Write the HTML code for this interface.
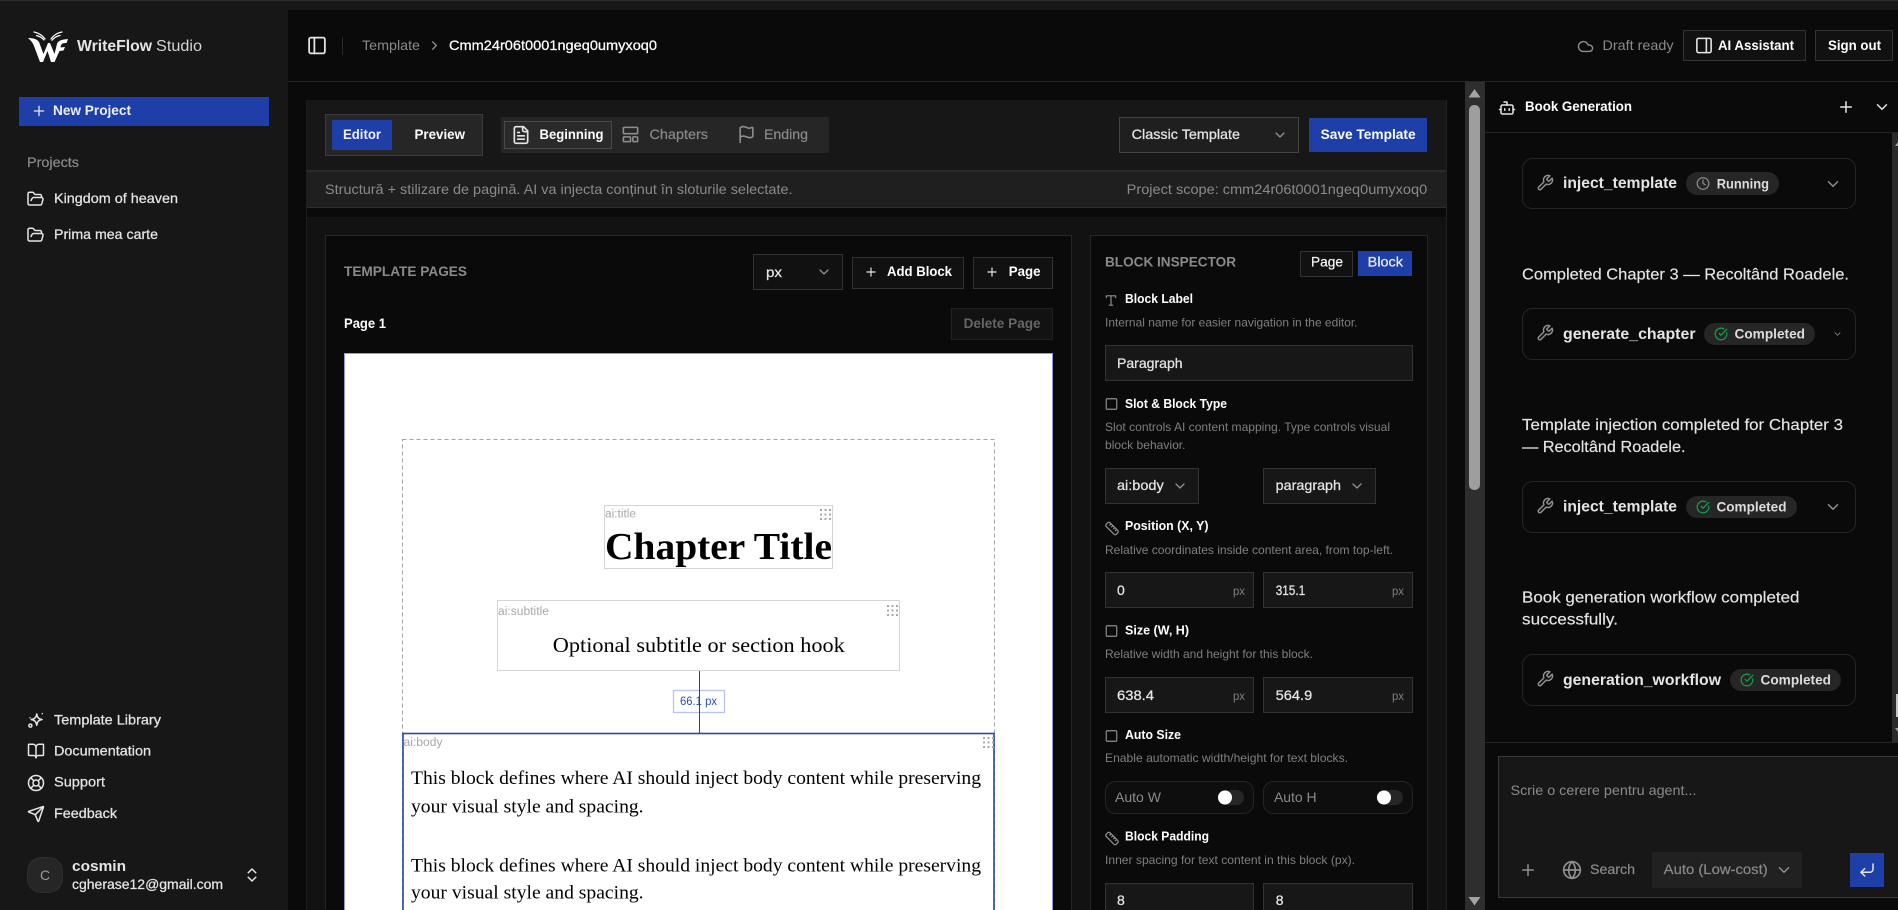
<!DOCTYPE html>
<html lang="ro">
<head>
<meta charset="utf-8">
<title>WriteFlow Studio</title>
<style>
html,body{margin:0;padding:0;background:#0a0a0a;width:1898px;height:910px;overflow:hidden}
svg{display:block}
text{font-family:"Liberation Sans","Noto Sans CJK SC",sans-serif;font-size:14px;fill:#e5e5e5;white-space:pre}
.m{stroke:#e5e5e5;stroke-width:.25}
.b{font-weight:700}
.w{fill:#fff}
.g{fill:#8a8a8a}
.gm{fill:#8a8a8a;stroke:#8a8a8a;stroke-width:.2}
.h{font-size:12px;fill:#7f7f7f}
.l{font-size:12.5px;fill:#fff;font-weight:700}
.t{font-size:16px;fill:#e5e5e5;stroke:#e5e5e5;stroke-width:.15}
.n{font-size:16px;fill:#e5e5e5;font-weight:700}
.bd{font-size:14px;fill:#dcdcdc;font-weight:700}
.s{font-family:"Liberation Serif","Noto Serif CJK SC",serif;fill:#000}
.lb{font-size:11.5px;fill:#a8a8a8}
.i{fill:none;stroke:#e5e5e5;stroke-width:2;stroke-linecap:round;stroke-linejoin:round}
.ig{fill:none;stroke:#8f8f8f;stroke-width:2;stroke-linecap:round;stroke-linejoin:round}
.ic{fill:none;stroke:#16a34a;stroke-width:2;stroke-linecap:round;stroke-linejoin:round}
.box{fill:#171717;stroke:#333}
.card{fill:#0a0a0a;stroke:#262626}
.pill{fill:#262626}
.grip{fill:#a8a8a8}
</style>
</head>
<body>
<svg xmlns="http://www.w3.org/2000/svg" width="1898" height="910" viewBox="0 0 1898 910">
<defs>
<symbol id="panel" viewBox="0 0 24 24"><rect x="3" y="3" width="18" height="18" rx="2"/><path d="M9 3v18"/></symbol>
<symbol id="panelr" viewBox="0 0 24 24"><rect x="3" y="3" width="18" height="18" rx="2"/><path d="M15 3v18"/></symbol>
<symbol id="folder" viewBox="0 0 24 24"><path d="m6 14 1.5-2.9A2 2 0 0 1 9.24 10H20a2 2 0 0 1 1.94 2.5l-1.54 6a2 2 0 0 1-1.95 1.5H4a2 2 0 0 1-2-2V5a2 2 0 0 1 2-2h3.9a2 2 0 0 1 1.69.9l.81 1.2a2 2 0 0 0 1.67.9H18a2 2 0 0 1 2 2v2"/></symbol>
<symbol id="spark" viewBox="0 0 24 24"><path d="M13 4c.6 4.6 2.4 6.6 7 7.400-4.600.8-6.400 2.800-7 7.600-.8-4.800-2.600-6.800-7.400-7.600 4.800-.8 6.600-2.800 7.400-7.400z"/><circle cx="4.500" cy="19.500" r="2"/><path d="M20.500 3.500v.01M4 9v.01"/></symbol>
<symbol id="book" viewBox="0 0 24 24"><path d="M12 7v14"/><path d="M3 18a1 1 0 0 1-1-1V4a1 1 0 0 1 1-1h5a4 4 0 0 1 4 4 4 4 0 0 1 4-4h5a1 1 0 0 1 1 1v13a1 1 0 0 1-1 1h-6a3 3 0 0 0-3 3 3 3 0 0 0-3-3z"/></symbol>
<symbol id="buoy" viewBox="0 0 24 24"><circle cx="12" cy="12" r="10"/><circle cx="12" cy="12" r="4"/><path d="m4.930 4.930 4.240 4.240M14.830 9.170l4.240-4.240M14.830 14.830l4.240 4.240M9.170 14.830l-4.240 4.240"/></symbol>
<symbol id="send" viewBox="0 0 24 24"><path d="M14.536 21.686a.5.5 0 0 0 .937-.024l6.500-19a.496.496 0 0 0-.635-.635l-19 6.500a.5.5 0 0 0-.024.937l7.930 3.180a2 2 0 0 1 1.112 1.110z"/><path d="m21.854 2.147-10.940 10.939"/></symbol>
<symbol id="updown" viewBox="0 0 24 24"><path d="m7 15 5 5 5-5M7 9l5-5 5 5"/></symbol>
<symbol id="file" viewBox="0 0 24 24"><path d="M15 2H6a2 2 0 0 0-2 2v16a2 2 0 0 0 2 2h12a2 2 0 0 0 2-2V7Z"/><path d="M14 2v4a2 2 0 0 0 2 2h4M10 9H8M16 13H8M16 17H8"/></symbol>
<symbol id="layout" viewBox="0 0 24 24"><rect x="3" y="3" width="18" height="8" rx="1"/><rect x="3" y="15" width="9" height="6" rx="1"/><rect x="15" y="15" width="6" height="6" rx="1"/></symbol>
<symbol id="flag" viewBox="0 0 24 24"><path d="M4 22V4a1 1 0 0 1 .4-.8A6 6 0 0 1 8 2c3 0 5 2 7.333 2q2 0 3.067-.8A1 1 0 0 1 20 4v10a1 1 0 0 1-.4.8A6 6 0 0 1 16 16c-3 0-5-2-8-2a6 6 0 0 0-4 1.528"/></symbol>
<symbol id="cloud" viewBox="0 0 24 24"><path d="M17.500 19H9a7 7 0 1 1 6.710-9h1.790a4.500 4.500 0 1 1 0 9Z"/></symbol>
<symbol id="bot" viewBox="0 0 24 24"><path d="M12 8V4H8"/><rect x="4" y="8" width="16" height="12" rx="2"/><path d="M2 14h2M20 14h2M15 13v2M9 13v2"/></symbol>
<symbol id="wrench" viewBox="0 0 24 24"><path d="M14.700 6.300a1 1 0 0 0 0 1.400l1.600 1.600a1 1 0 0 0 1.400 0l3.770-3.770a6 6 0 0 1-7.940 7.940l-6.910 6.910a2.120 2.120 0 0 1-3-3l6.910-6.910a6 6 0 0 1 7.940-7.940l-3.760 3.760z"/></symbol>
<symbol id="clock" viewBox="0 0 24 24"><circle cx="12" cy="12" r="10"/><path d="M12 6v6l4 2"/></symbol>
<symbol id="check" viewBox="0 0 24 24"><path d="M21.801 10A10 10 0 1 1 17 3.335"/><path d="m9 11 3 3L22 4"/></symbol>
<symbol id="globe" viewBox="0 0 24 24"><circle cx="12" cy="12" r="10"/><path d="M12 2a14.500 14.500 0 0 0 0 20 14.500 14.500 0 0 0 0-20M2 12h20"/></symbol>
<symbol id="enter" viewBox="0 0 24 24"><path d="M20 4v7a4 4 0 0 1-4 4H4"/><path d="m9 10-5 5 5 5"/></symbol>
<symbol id="ruler" viewBox="0 0 24 24"><path d="M21.300 15.300a2.400 2.400 0 0 1 0 3.400l-2.600 2.600a2.400 2.400 0 0 1-3.400 0L2.700 8.700a2.410 2.410 0 0 1 0-3.400l2.600-2.600a2.410 2.410 0 0 1 3.400 0Z"/><path d="m14.500 12.500 2-2M11.500 9.500l2-2M8.500 6.500l2-2M17.500 15.500l2-2"/></symbol>
<symbol id="type" viewBox="0 0 24 24"><path d="M12 4v16M4 7V4h16v3M9 20h6"/></symbol>
<symbol id="square" viewBox="0 0 24 24"><rect x="3" y="3" width="18" height="18" rx="2"/></symbol>
<symbol id="chev" viewBox="0 0 24 24"><path d="m6 9 6 6 6-6"/></symbol>
<symbol id="plus" viewBox="0 0 24 24"><path d="M5 12h14M12 5v14"/></symbol>
<symbol id="chevr" viewBox="0 0 24 24"><path d="m9 18 6-6-6-6"/></symbol>
<symbol id="gripd" viewBox="0 0 11 11"><g class="grip" style="stroke:none"><rect x="0" y="0" width="2" height="2"/><rect x="4.500" y="0" width="2" height="2"/><rect x="9" y="0" width="2" height="2"/><rect x="0" y="4.500" width="2" height="2"/><rect x="4.500" y="4.500" width="2" height="2"/><rect x="9" y="4.500" width="2" height="2"/><rect x="0" y="9" width="2" height="2"/><rect x="4.500" y="9" width="2" height="2"/><rect x="9" y="9" width="2" height="2"/></g></symbol>
</defs>

<!-- page base -->
<rect width="1898" height="910" fill="#0a0a0a"/>
<rect width="1898" height="10" fill="#171717"/>
<rect width="1898" height="1" fill="#2e2d28"/>

<!-- sidebar -->
<rect x="0" y="0" width="288" height="910" fill="#171717"/>
<rect width="288" height="1" fill="#2e2d28"/>
<path fill="#fff" d="M28 38C33 38 37 39 39 42L43.500 54L48 43L50 43L54.500 54L57 44C58 40.500 62 39.500 68 39L66.500 43C63 43 61.500 43.500 61 45.500L60.500 47.500L65 47L63.500 50.500L59.500 51L54.500 62L51 62L47.500 51L43 62L40 62L34 46C33 43 31 40.500 28 38Z"/>
<g fill="none" stroke="#fff" stroke-linecap="round" stroke-linejoin="round" stroke-width="1.200">
  <path d="M34 32c4 .8 8 3 11 7M36.500 35.500c3 .8 5.500 2.200 7.500 4.500"/>
  <path d="M62 32c-4 .6-8 2.800-11 7M60 35.500c-3 .5-6 2.300-8 4.800"/>
</g>
<text x="77" y="51" textLength="75" lengthAdjust="spacingAndGlyphs" class="b" style="font-size:16px;fill:#e5e5e5">WriteFlow</text>
<text x="156" y="51" textLength="46" lengthAdjust="spacingAndGlyphs" style="font-size:16px;fill:#d4d4d4">Studio</text>

<rect x="19" y="97" width="250" height="29" fill="#1e3ea8"/>
<use href="#plus" x="31" y="103" width="16" height="16" class="i"/>
<text x="53" y="115" textLength="78" lengthAdjust="spacingAndGlyphs" class="b" style="fill:#eef">New Project</text>
<text x="27" y="167" textLength="52" lengthAdjust="spacingAndGlyphs" class="gm">Projects</text>
<use href="#folder" x="26.500" y="190" width="18" height="18" class="i"/>
<text x="54" y="203" textLength="124" lengthAdjust="spacingAndGlyphs" class="m">Kingdom of heaven</text>
<use href="#folder" x="26.500" y="226" width="18" height="18" class="i"/>
<text x="54" y="239" textLength="104" lengthAdjust="spacingAndGlyphs" class="m">Prima mea carte</text>

<use href="#spark" x="27" y="711" width="18" height="18" class="i"/>
<text x="54" y="724.500" textLength="107" lengthAdjust="spacingAndGlyphs" class="m">Template Library</text>
<use href="#book" x="27" y="742" width="18" height="18" class="i"/>
<text x="54" y="755.500" textLength="97" lengthAdjust="spacingAndGlyphs" class="m">Documentation</text>
<use href="#buoy" x="27" y="774" width="18" height="18" class="i"/>
<text x="54" y="786.500" textLength="51" lengthAdjust="spacingAndGlyphs" class="m">Support</text>
<use href="#send" x="27" y="805" width="18" height="18" class="i"/>
<text x="54" y="818" textLength="63" lengthAdjust="spacingAndGlyphs" class="m">Feedback</text>

<rect x="27.500" y="857.500" width="35" height="35" rx="14" fill="#262626" stroke="#2f2f2f"/>
<text x="45" y="880" text-anchor="middle" style="font-size:14px;fill:#9a9a9a">C</text>
<text x="72" y="871" textLength="54" lengthAdjust="spacingAndGlyphs" class="b" style="font-size:15px">cosmin</text>
<text x="72" y="889" textLength="151" lengthAdjust="spacingAndGlyphs" class="m">cgherase12@gmail.com</text>
<use href="#updown" x="243" y="866" width="18" height="18" class="i"/>

<!-- header -->
<rect x="288" y="10" width="1610" height="71" fill="#0a0a0a"/>
<rect x="288" y="81" width="1610" height="1" fill="#262626"/>
<use href="#panel" x="306.500" y="35" width="21" height="21" class="i"/>
<rect x="342" y="37" width="1" height="18" fill="#2a2a2a"/>
<text x="362" y="50" textLength="58" lengthAdjust="spacingAndGlyphs" class="g">Template</text>
<use href="#chevr" x="427" y="38" width="15" height="15" class="ig"/>
<text x="449" y="50" textLength="208" lengthAdjust="spacingAndGlyphs" class="w" style="stroke:#fff;stroke-width:.25">Cmm24r06t0001ngeq0umyxoq0</text>
<use href="#cloud" x="1577" y="38" width="17" height="17" class="ig"/>
<text x="1602.500" y="50" textLength="71" lengthAdjust="spacingAndGlyphs" class="g">Draft ready</text>
<rect x="1683.500" y="30.500" width="122" height="30" fill="#111" stroke="#333"/>
<use href="#panelr" x="1694.500" y="36" width="19" height="19" class="i"/>
<text x="1718" y="50" textLength="76" lengthAdjust="spacingAndGlyphs" class="b w">AI Assistant</text>
<rect x="1815.500" y="30.500" width="77" height="30" fill="#111" stroke="#333"/>
<text x="1828" y="50" textLength="53" lengthAdjust="spacingAndGlyphs" class="b w">Sign out</text>

<!-- toolbar -->
<rect x="306" y="100" width="1141" height="71" fill="#171717"/>
<rect x="306" y="170" width="1141" height="2" fill="#2a2a2a"/>
<rect x="306" y="172" width="1141" height="35" fill="#1f1f1f"/>
<rect x="306" y="207" width="1141" height="1" fill="#2e2e2e"/>
<rect x="306" y="100" width="1" height="810" fill="#1c1c1c"/>
<rect x="1446" y="100" width="1" height="810" fill="#222"/>

<rect x="325.500" y="114.500" width="157" height="41" fill="#262626" stroke="#3c3c3c"/>
<rect x="332" y="120" width="60" height="30" fill="#1e3ea8"/>
<text x="343" y="139" textLength="38" lengthAdjust="spacingAndGlyphs" class="b" style="fill:#eef">Editor</text>
<text x="414.500" y="139" textLength="50.500" lengthAdjust="spacingAndGlyphs" class="b w">Preview</text>

<rect x="501" y="117" width="328" height="36" fill="#262626"/>
<rect x="504.500" y="121.500" width="107" height="27" fill="#2a2a2a" stroke="#4a4a4a"/>
<use href="#file" x="511" y="125" width="20" height="20" class="i"/>
<text x="539.500" y="139" textLength="64" lengthAdjust="spacingAndGlyphs" class="b w">Beginning</text>
<use href="#layout" x="621" y="125" width="19" height="19" class="ig"/>
<text x="649.500" y="139" textLength="58.500" lengthAdjust="spacingAndGlyphs" class="gm">Chapters</text>
<use href="#flag" x="737" y="125" width="19" height="19" class="ig"/>
<text x="764" y="139" textLength="44" lengthAdjust="spacingAndGlyphs" class="gm">Ending</text>

<rect x="1119.500" y="117.500" width="179" height="35" fill="#1f1f1f" stroke="#444"/>
<text x="1131.700" y="139" textLength="108.300" lengthAdjust="spacingAndGlyphs" class="m">Classic Template</text>
<use href="#chev" x="1272" y="127" width="16" height="16" class="ig"/>
<rect x="1309" y="118" width="118" height="34" fill="#1e3ea8"/>
<text x="1320.600" y="139" textLength="95" lengthAdjust="spacingAndGlyphs" class="b w">Save Template</text>

<text x="325" y="194" textLength="467.500" lengthAdjust="spacingAndGlyphs" class="g">Structură + stilizare de pagină. AI va injecta conținut în sloturile selectate.</text>
<text x="1126.700" y="194" textLength="300.500" lengthAdjust="spacingAndGlyphs" class="g">Project scope: cmm24r06t0001ngeq0umyxoq0</text>

<!-- workspace -->
<rect x="307" y="217" width="1139" height="693" fill="#121212"/>

<!-- template pages card -->
<rect x="325.500" y="235.500" width="746" height="690" class="card"/>
<text x="344" y="276" textLength="123" lengthAdjust="spacingAndGlyphs" class="b" style="font-size:13.500px;fill:#8a8a8a">TEMPLATE PAGES</text>
<rect x="753.500" y="254.500" width="89" height="35" fill="#111" stroke="#333"/>
<text x="766" y="277" textLength="16" lengthAdjust="spacingAndGlyphs" class="m">px</text>
<use href="#chev" x="816" y="264" width="16" height="16" class="ig"/>
<rect x="852.500" y="257.500" width="111" height="31" fill="#111" stroke="#333"/>
<use href="#plus" x="864" y="265" width="14" height="14" class="i"/>
<text x="887" y="276" textLength="65" lengthAdjust="spacingAndGlyphs" class="b w">Add Block</text>
<rect x="973.500" y="257.500" width="79" height="31" fill="#111" stroke="#333"/>
<use href="#plus" x="985" y="265" width="14" height="14" class="i"/>
<text x="1008.800" y="276" textLength="31.700" lengthAdjust="spacingAndGlyphs" class="b w">Page</text>
<text x="344" y="328" textLength="42" lengthAdjust="spacingAndGlyphs" class="b w">Page 1</text>
<rect x="951.500" y="308.500" width="101" height="31" fill="#121212" stroke="#222"/>
<text x="963.600" y="328" textLength="77" lengthAdjust="spacingAndGlyphs" class="b" style="fill:#666">Delete Page</text>

<!-- white page -->
<rect x="344.500" y="353.500" width="708" height="570" fill="#fff" stroke="#8f9cd6"/>
<rect x="402.500" y="439.500" width="592" height="480" fill="none" stroke="#a3a3ad" stroke-dasharray="4 3"/>

<rect x="604.500" y="505.500" width="228" height="63" fill="#fff" stroke="#d4d4d8"/>
<text x="605" y="517.500" textLength="31" lengthAdjust="spacingAndGlyphs" class="lb">ai:title</text>
<use href="#gripd" x="820" y="509" width="11" height="11"/>
<text x="605" y="559" textLength="227" lengthAdjust="spacingAndGlyphs" class="s b" style="font-size:38px">Chapter Title</text>

<rect x="497.500" y="600.500" width="402" height="70" fill="#fff" stroke="#d4d4d8"/>
<text x="498" y="615" textLength="51" lengthAdjust="spacingAndGlyphs" class="lb">ai:subtitle</text>
<use href="#gripd" x="887" y="605" width="11" height="11"/>
<text x="552.800" y="652" textLength="292" lengthAdjust="spacingAndGlyphs" class="s" style="font-size:21px">Optional subtitle or section hook</text>

<rect x="673.500" y="690.500" width="51" height="22" fill="#fff" stroke="#b9c4ec" stroke-width="1.300"/>
<text x="680" y="705" textLength="37" lengthAdjust="spacingAndGlyphs" style="font-size:12px;fill:#2f4fb8">66.1 px</text>
<rect x="699" y="671" width="1" height="62" fill="#1e3ea8"/>

<rect x="403" y="733.500" width="591" height="190" fill="#fff" stroke="#2646b0" stroke-width="1.600"/>
<text x="403.500" y="746" textLength="39" lengthAdjust="spacingAndGlyphs" class="lb">ai:body</text>
<use href="#gripd" x="983" y="737" width="11" height="11"/>
<text x="411" y="784" textLength="570" lengthAdjust="spacingAndGlyphs" class="s" style="font-size:19px">This block defines where AI should inject body content while preserving</text>
<text x="411" y="812.700" textLength="232.600" lengthAdjust="spacingAndGlyphs" class="s" style="font-size:19px">your visual style and spacing.</text>
<text x="411" y="871.300" textLength="570" lengthAdjust="spacingAndGlyphs" class="s" style="font-size:19px">This block defines where AI should inject body content while preserving</text>
<text x="411" y="898.700" textLength="232.600" lengthAdjust="spacingAndGlyphs" class="s" style="font-size:19px">your visual style and spacing.</text>

<!-- inspector card -->
<rect x="1090.500" y="235.500" width="337" height="690" class="card"/>
<text x="1105" y="266.700" textLength="131" lengthAdjust="spacingAndGlyphs" class="b" style="font-size:13.500px;fill:#8a8a8a">BLOCK INSPECTOR</text>
<rect x="1300.500" y="251.500" width="52" height="25" fill="#111" stroke="#333"/>
<text x="1311" y="266.700" textLength="32" lengthAdjust="spacingAndGlyphs" class="m" style="fill:#fff">Page</text>
<rect x="1358" y="251" width="54" height="25" fill="#1e3ea8"/>
<text x="1367.700" y="266.700" textLength="35.300" lengthAdjust="spacingAndGlyphs" class="m" style="fill:#eef">Block</text>

<use href="#type" x="1104" y="293.500" width="14" height="14" class="ig"/>
<text x="1125" y="303" textLength="68" lengthAdjust="spacingAndGlyphs" class="l">Block Label</text>
<text x="1105" y="326.700" textLength="252.500" lengthAdjust="spacingAndGlyphs" class="h">Internal name for easier navigation in the editor.</text>
<rect x="1105.500" y="345.500" width="307" height="35" class="box"/>
<text x="1117" y="368" textLength="65.600" lengthAdjust="spacingAndGlyphs" class="m">Paragraph</text>

<use href="#square" x="1104.500" y="397" width="14" height="14" class="ig"/>
<text x="1125" y="408" textLength="102" lengthAdjust="spacingAndGlyphs" class="l">Slot &amp; Block Type</text>
<text x="1105" y="431" textLength="285" lengthAdjust="spacingAndGlyphs" class="h">Slot controls AI content mapping. Type controls visual</text>
<text x="1105" y="449" textLength="80.500" lengthAdjust="spacingAndGlyphs" class="h">block behavior.</text>
<rect x="1105.500" y="468.500" width="93" height="35" class="box"/>
<text x="1117" y="490" textLength="46.700" lengthAdjust="spacingAndGlyphs" class="m">ai:body</text>
<use href="#chev" x="1172" y="478" width="16" height="16" class="ig"/>
<rect x="1263.500" y="468.500" width="112" height="35" class="box"/>
<text x="1275.700" y="490" textLength="65.300" lengthAdjust="spacingAndGlyphs" class="m">paragraph</text>
<use href="#chev" x="1349" y="478" width="16" height="16" class="ig"/>

<use href="#ruler" x="1104.500" y="521" width="15" height="15" class="ig"/>
<text x="1125" y="530" textLength="83.500" lengthAdjust="spacingAndGlyphs" class="l">Position (X, Y)</text>
<text x="1105" y="554" textLength="288" lengthAdjust="spacingAndGlyphs" class="h">Relative coordinates inside content area, from top-left.</text>
<rect x="1105.500" y="572.500" width="148" height="35" class="box"/>
<text x="1117" y="595" class="m">0</text>
<text x="1233" y="595" textLength="12" lengthAdjust="spacingAndGlyphs" style="font-size:12px;fill:#7f7f7f">px</text>
<rect x="1263.500" y="572.500" width="149" height="35" class="box"/>
<text x="1275.700" y="595" textLength="29.500" lengthAdjust="spacingAndGlyphs" class="m">315.1</text>
<text x="1392" y="595" textLength="12" lengthAdjust="spacingAndGlyphs" style="font-size:12px;fill:#7f7f7f">px</text>

<use href="#square" x="1104.500" y="624" width="14" height="14" class="ig"/>
<text x="1125" y="634.700" textLength="64" lengthAdjust="spacingAndGlyphs" class="l">Size (W, H)</text>
<text x="1105" y="658" textLength="208" lengthAdjust="spacingAndGlyphs" class="h">Relative width and height for this block.</text>
<rect x="1105.500" y="677.500" width="148" height="35" class="box"/>
<text x="1117" y="700" textLength="37" lengthAdjust="spacingAndGlyphs" class="m">638.4</text>
<text x="1233" y="700" textLength="12" lengthAdjust="spacingAndGlyphs" style="font-size:12px;fill:#7f7f7f">px</text>
<rect x="1263.500" y="677.500" width="149" height="35" class="box"/>
<text x="1275.700" y="700" textLength="36.500" lengthAdjust="spacingAndGlyphs" class="m">564.9</text>
<text x="1392" y="700" textLength="12" lengthAdjust="spacingAndGlyphs" style="font-size:12px;fill:#7f7f7f">px</text>

<use href="#square" x="1104.500" y="729" width="14" height="14" class="ig"/>
<text x="1125" y="739" textLength="56" lengthAdjust="spacingAndGlyphs" class="l">Auto Size</text>
<text x="1105" y="762" textLength="243" lengthAdjust="spacingAndGlyphs" class="h">Enable automatic width/height for text blocks.</text>
<rect x="1105.500" y="781.500" width="148" height="32" rx="10" fill="#0e0e0e" stroke="#262626"/>
<text x="1115" y="802" textLength="46" lengthAdjust="spacingAndGlyphs" class="g">Auto W</text>
<rect x="1217.600" y="790" width="26.500" height="15" rx="7.500" fill="#262626"/>
<circle cx="1225" cy="797.500" r="7" fill="#fff"/>
<rect x="1263.500" y="781.500" width="149" height="32" rx="10" fill="#0e0e0e" stroke="#262626"/>
<text x="1274" y="802" textLength="42.600" lengthAdjust="spacingAndGlyphs" class="g">Auto H</text>
<rect x="1376.500" y="790" width="26.500" height="15" rx="7.500" fill="#262626"/>
<circle cx="1384" cy="797.500" r="7" fill="#fff"/>

<use href="#ruler" x="1104.500" y="831" width="15" height="15" class="ig"/>
<text x="1125" y="840.700" textLength="84" lengthAdjust="spacingAndGlyphs" class="l">Block Padding</text>
<text x="1105" y="864" textLength="250" lengthAdjust="spacingAndGlyphs" class="h">Inner spacing for text content in this block (px).</text>
<rect x="1105.500" y="883.500" width="148" height="40" class="box"/>
<text x="1117" y="905" class="m">8</text>
<rect x="1263.500" y="883.500" width="149" height="40" class="box"/>
<text x="1275.700" y="905" class="m">8</text>

<!-- outer scrollbar -->
<rect x="1465" y="82" width="20" height="828" fill="#2e2e2e"/>
<rect x="1469" y="105" width="11" height="385" rx="5" fill="#9e9e9e"/>
<path d="M1474.500 89l6 8.500h-12z" fill="#a3a3a3"/>
<path d="M1468.500 897h12l-6 8.500z" fill="#a3a3a3"/>

<!-- assistant panel -->
<rect x="1485" y="82" width="413" height="828" fill="#0a0a0a"/>
<rect x="1485" y="132" width="413" height="1" fill="#262626"/>
<use href="#bot" x="1498" y="99" width="18" height="18" class="i"/>
<text x="1525" y="111" textLength="107" lengthAdjust="spacingAndGlyphs" class="b w" style="font-size:13.500px">Book Generation</text>
<use href="#plus" x="1837" y="98" width="18" height="18" class="i"/>
<use href="#chev" x="1873" y="98" width="18" height="18" class="i"/>

<rect x="1892" y="133" width="6" height="609" fill="#2a2a2a"/>
<path d="M1898 142l-3 4h3z" fill="#9e9e9e"/>
<rect x="1896" y="694" width="2" height="23" fill="#c4c4c4"/>
<path d="M1895 728h3v4z" fill="#9e9e9e"/>

<!-- card 1 -->
<rect x="1522.500" y="158.500" width="333" height="50" rx="10" class="card"/>
<use href="#wrench" x="1536" y="174" width="18" height="18" class="ig"/>
<text x="1563" y="188" textLength="114" lengthAdjust="spacingAndGlyphs" class="n">inject_template</text>
<rect x="1686" y="172" width="93" height="23" rx="11.500" class="pill"/>
<use href="#clock" x="1696" y="176.500" width="14" height="14" class="ig"/>
<text x="1716.700" y="188.500" textLength="52.300" lengthAdjust="spacingAndGlyphs" class="bd">Running</text>
<use href="#chev" x="1824" y="175" width="18" height="18" class="ig"/>

<text x="1522" y="279.300" textLength="327" lengthAdjust="spacingAndGlyphs" class="t">Completed Chapter 3 — Recoltând Roadele.</text>

<!-- card 2 -->
<rect x="1522.500" y="308.500" width="333" height="51" rx="10" class="card"/>
<use href="#wrench" x="1536" y="324" width="18" height="18" class="ig"/>
<text x="1563" y="339" textLength="132.500" lengthAdjust="spacingAndGlyphs" class="n">generate_chapter</text>
<rect x="1704" y="323" width="111" height="22" rx="11" class="pill"/>
<use href="#check" x="1714" y="327" width="14" height="14" class="ic"/>
<text x="1734.500" y="338.500" textLength="70.500" lengthAdjust="spacingAndGlyphs" class="bd">Completed</text>
<use href="#chev" x="1832.500" y="329" width="10" height="10" class="ig"/>

<text x="1522" y="430" textLength="321" lengthAdjust="spacingAndGlyphs" class="t">Template injection completed for Chapter 3</text>
<text x="1522" y="452" textLength="163.500" lengthAdjust="spacingAndGlyphs" class="t">— Recoltând Roadele.</text>

<!-- card 3 -->
<rect x="1522.500" y="481.500" width="333" height="51" rx="10" class="card"/>
<use href="#wrench" x="1536" y="497" width="18" height="18" class="ig"/>
<text x="1563" y="511.700" textLength="114" lengthAdjust="spacingAndGlyphs" class="n">inject_template</text>
<rect x="1686" y="496" width="111" height="22" rx="11" class="pill"/>
<use href="#check" x="1696" y="500" width="14" height="14" class="ic"/>
<text x="1716.500" y="511.700" textLength="70" lengthAdjust="spacingAndGlyphs" class="bd">Completed</text>
<use href="#chev" x="1824" y="498" width="18" height="18" class="ig"/>

<text x="1522" y="602.700" textLength="277.500" lengthAdjust="spacingAndGlyphs" class="t">Book generation workflow completed</text>
<text x="1522" y="624.700" textLength="96" lengthAdjust="spacingAndGlyphs" class="t">successfully.</text>

<!-- card 4 -->
<rect x="1522.500" y="654.500" width="333" height="51" rx="10" class="card"/>
<use href="#wrench" x="1536" y="670" width="18" height="18" class="ig"/>
<text x="1563" y="685" textLength="158" lengthAdjust="spacingAndGlyphs" class="n">generation_workflow</text>
<rect x="1730" y="669" width="111" height="22" rx="11" class="pill"/>
<use href="#check" x="1740" y="673" width="14" height="14" class="ic"/>
<text x="1760.500" y="684.500" textLength="70.500" lengthAdjust="spacingAndGlyphs" class="bd">Completed</text>

<!-- composer -->
<rect x="1485" y="742" width="413" height="1" fill="#262626"/>
<rect x="1498.500" y="756.500" width="410" height="141" fill="#171717" stroke="#3a3a3a"/>
<text x="1510.500" y="795" textLength="186" lengthAdjust="spacingAndGlyphs" class="g">Scrie o cerere pentru agent...</text>
<use href="#plus" x="1519" y="861" width="18" height="18" class="ig"/>
<use href="#globe" x="1562" y="860" width="20" height="20" class="ig"/>
<text x="1590" y="874" textLength="45" lengthAdjust="spacingAndGlyphs" class="gm">Search</text>
<rect x="1652" y="852" width="150" height="36" fill="#212121"/>
<text x="1663.700" y="874" textLength="104" lengthAdjust="spacingAndGlyphs" class="gm">Auto (Low-cost)</text>
<use href="#chev" x="1775" y="861" width="18" height="18" class="ig"/>
<rect x="1850" y="853" width="34" height="34" fill="#1e3ea8"/>
<use href="#enter" x="1858" y="861" width="18" height="18" class="i"/>
</svg>
</body>
</html>
